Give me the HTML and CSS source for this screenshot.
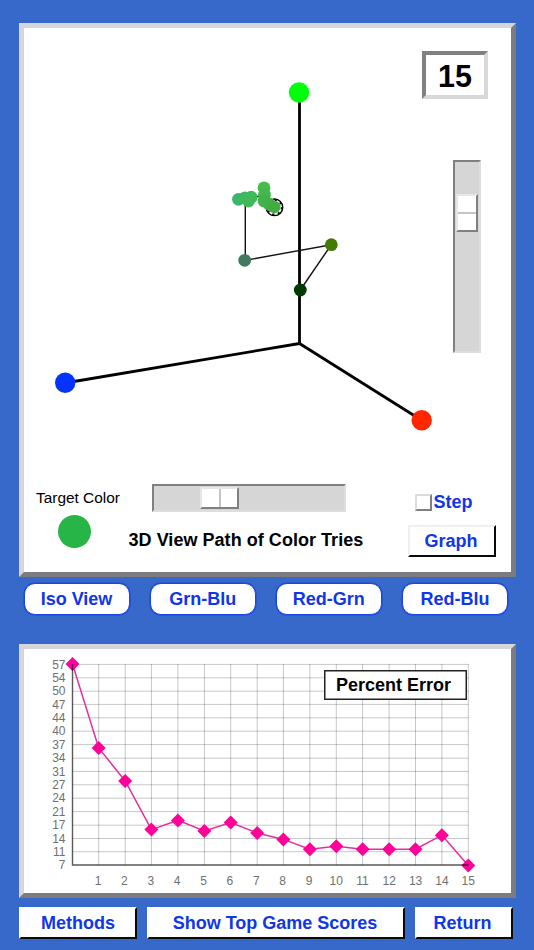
FILE: index.html
```html
<!DOCTYPE html>
<html lang="en">
<head>
<meta charset="utf-8">
<title>Color Tries</title>
<link rel="stylesheet" href="styles.css">
</head>
<body>
<main class="app">
  <section class="panel view">
    <svg class="scene" viewBox="24 28 487 442" width="487" height="442">
      <g class="axes">
        <path d="M299.500 343.500V92"/>
        <path d="M299.500 343.500L65 383"/>
        <path d="M299.500 343.500L422 420.500"/>
      </g>
      <circle cx="299" cy="92.500" r="10.200" fill="#00ff0a"/>
      <circle cx="65.200" cy="382.800" r="10.200" fill="#0433ff"/>
      <circle cx="421.700" cy="420.300" r="10.200" fill="#ff2600"/>
      <path class="trail" d="M300.300 290L331.300 244.700L245.300 260.300V199L251 197L264 196V188"/>
      <circle cx="274.500" cy="207.300" r="8.300" fill="#fff" stroke="#000" stroke-width="1.300"/>
      <circle cx="274.500" cy="207.300" r="7.300" fill="none" stroke="#000" stroke-width="2" stroke-dasharray="2.200 3.530"/>
      <circle cx="300.300" cy="290" r="6.400" fill="#013a01"/>
      <circle cx="331.300" cy="244.700" r="6.400" fill="#417c05"/>
      <circle cx="244.700" cy="260.300" r="6.400" fill="#427a5f"/>
      <circle cx="238.500" cy="199.300" r="6.400" fill="#3db46c"/>
      <circle cx="245" cy="197.800" r="6.400" fill="#3fb660"/>
      <circle cx="248.500" cy="201" r="6.400" fill="#40b858"/>
      <circle cx="251.200" cy="197.200" r="6.400" fill="#41b95a"/>
      <circle cx="264" cy="187.800" r="6.400" fill="#44bd49"/>
      <circle cx="264.500" cy="194.500" r="6.400" fill="#44b84c"/>
      <circle cx="264" cy="201" r="6.400" fill="#43b24b"/>
      <circle cx="269" cy="204" r="6.400" fill="#43af48"/>
      <circle cx="274.300" cy="207" r="6.200" fill="#42ad3e"/>
    </svg>
    <div class="side">
      <output class="counter">15</output>
      <div class="slider vertical"><div class="thumb"><i></i><i></i></div></div>
    </div>
    <div class="controls">
      <div class="target">
        <span>Target Color</span>
        <div class="swatch"></div>
      </div>
      <div class="center">
        <div class="slider horizontal"><div class="thumb"><i></i><i></i></div></div>
        <h1>3D View Path of Color Tries</h1>
      </div>
      <div class="actions">
        <label class="step"><span class="box"></span>Step</label>
        <button class="bevel graph">Graph</button>
      </div>
    </div>
  </section>

  <nav class="views">
    <button>Iso View</button>
    <button>Grn-Blu</button>
    <button>Red-Grn</button>
    <button>Red-Blu</button>
  </nav>

  <section class="panel error">
    <svg class="chart" viewBox="24 649 487 244" width="487" height="244">
      <path class="grid" d="M72.500 664.400H468.500M72.500 677.800H468.500M72.500 691.200H468.500M72.500 704.400H468.500M72.500 717.800H468.500M72.500 731.200H468.500M72.500 744.600H468.500M72.500 758.200H468.500M72.500 771.400H468.500M72.500 784.800H468.500M72.500 798.200H468.500M72.500 811.600H468.500M72.500 825.200H468.500M72.500 838.500H468.500M72.500 851.700H468.500M98.700 664V865M125.200 664V865M151.400 664V865M177.900 664V865M204.400 664V865M230.700 664V865M257.200 664V865M283.400 664V865M309.900 664V865M336.300 664V865M362.600 664V865M389.100 664V865M415.500 664V865M441.900 664V865M468.300 664V865"/>
      <g class="labels y">
        <text x="65.500" y="668.500">57</text><text x="65.500" y="681.900">54</text>
        <text x="65.500" y="695.300">50</text><text x="65.500" y="708.500">47</text>
        <text x="65.500" y="721.900">44</text><text x="65.500" y="735.300">40</text>
        <text x="65.500" y="748.700">37</text><text x="65.500" y="762.200">34</text>
        <text x="65.500" y="775.500">31</text><text x="65.500" y="788.900">27</text>
        <text x="65.500" y="802.300">24</text><text x="65.500" y="815.700">21</text>
        <text x="65.500" y="829.200">17</text><text x="65.500" y="842.700">14</text>
        <text x="65.500" y="856">11</text><text x="65.500" y="869.300">7</text>
      </g>
      <g class="labels x">
        <text x="98" y="885">1</text><text x="124.300" y="885">2</text>
        <text x="150.800" y="885">3</text><text x="177" y="885">4</text>
        <text x="203.500" y="885">5</text><text x="229.800" y="885">6</text>
        <text x="256.300" y="885">7</text><text x="282.700" y="885">8</text>
        <text x="309" y="885">9</text><text x="336.300" y="885">10</text>
        <text x="362.500" y="885">11</text><text x="389.200" y="885">12</text>
        <text x="415.600" y="885">13</text><text x="442" y="885">14</text>
        <text x="468.300" y="885">15</text>
      </g>
      <polyline class="series" points="72.500,664 98.700,748 125.200,781 151.400,829.600 177.900,820.400 204.400,831 230.700,822.600 257.200,833 283.400,839.400 309.900,849.200 336.300,846.200 362.600,849.200 389.100,849.200 415.500,849.200 441.900,835.200 468.300,865.500"/>
      <defs><path id="mark" d="M0-7L7 0L0 7L-7 0Z"/></defs>
      <g fill="#ff0099">
        <use href="#mark" x="72.500" y="664"/><use href="#mark" x="98.700" y="748"/>
        <use href="#mark" x="125.200" y="781"/><use href="#mark" x="151.400" y="829.600"/>
        <use href="#mark" x="177.900" y="820.400"/><use href="#mark" x="204.400" y="831"/>
        <use href="#mark" x="230.700" y="822.600"/><use href="#mark" x="257.200" y="833"/>
        <use href="#mark" x="283.400" y="839.400"/><use href="#mark" x="309.900" y="849.200"/>
        <use href="#mark" x="336.300" y="846.200"/><use href="#mark" x="362.600" y="849.200"/>
        <use href="#mark" x="389.100" y="849.200"/><use href="#mark" x="415.500" y="849.200"/>
        <use href="#mark" x="441.900" y="835.200"/><use href="#mark" x="468.300" y="865.500"/>
      </g>
      <path class="frame" d="M72.500 664V865H468.500"/>
    </svg>
    <h2 class="chart-title">Percent Error</h2>
  </section>

  <footer class="bottom">
    <button class="bevel methods">Methods</button>
    <button class="bevel scores">Show Top Game Scores</button>
    <button class="bevel return">Return</button>
  </footer>
</main>
</body>
</html>
```
FILE: styles.css
```css
* { box-sizing: border-box; }

body {
  margin: 0;
  background: #3769cb;
  font-family: "Liberation Sans", Arial, sans-serif;
  color: #000;
}

.app {
  width: 534px;
  height: 950px;
  padding: 23.400px 18px 0 19px;
  display: flex;
  flex-direction: column;
  overflow: hidden;
}

.panel {
  width: 497px;
  flex: none;
  background: #fff;
  border: 5px solid;
  border-color: #d6d6d8 #7c7c80 #7c7c80 #d6d6d8;
  display: grid;
}

.view {
  height: 553.300px;
  grid-template-rows: 442px 1fr;
}

.scene, .side { grid-area: 1 / 1; }
.scene, .chart { display: block; }

.axes path { stroke: #000; stroke-width: 2.800; fill: none; }
.trail { stroke: #111; stroke-width: 1.400; fill: none; }

.side {
  justify-self: end;
  width: 89px;
  padding-top: 23px;
}

.counter {
  display: block;
  width: 66px;
  height: 48px;
  border: 4px solid;
  border-color: #808080 #d8d8d8 #d8d8d8 #808080;
  font: bold 30.500px/43px "Liberation Sans", Arial, sans-serif;
  text-align: center;
}

.slider {
  background: #d6d6d6;
  border: 2px solid;
  border-color: #808080 #dedede #dedede #808080;
  display: flex;
}

.vertical {
  width: 28px;
  height: 193px;
  margin: 61px 0 0 31px;
  padding: 32px 1px 0 1px;
}

.horizontal {
  width: 194px;
  height: 28px;
  padding: 1px 0 0 46px;
}

.thumb {
  background: #fff;
  border: 2px solid;
  border-color: #e6e6e6 #808080 #808080 #e6e6e6;
  display: flex;
}
.vertical .thumb { width: 22px; height: 38px; flex-direction: column; }
.horizontal .thumb { width: 39px; height: 22px; }
.thumb i { flex: 1; }
.vertical .thumb i + i { border-top: 2px solid #c4c4c4; }
.horizontal .thumb i + i { border-left: 2px solid #c4c4c4; }

.controls {
  display: grid;
  grid-template-columns: 104px 280px 1fr;
}

.target {
  padding: 19px 0 0 12px;
  font-size: 15.400px;
  line-height: 18px;
  white-space: nowrap;
}
.swatch {
  width: 33.500px;
  height: 33.500px;
  margin: 7.500px 0 0 21.500px;
  border-radius: 50%;
  background: #26b546;
}

.center { padding-top: 14px; }
.center .slider { margin-left: 24px; }
.center h1 {
  margin: 18px 0 0 .5px;
  font-size: 18px;
  line-height: 20px;
  letter-spacing: .04px;
  white-space: nowrap;
}

.actions { padding-top: 22px; }
.step {
  display: flex;
  align-items: center;
  gap: 2px;
  height: 20px;
  margin-left: 6.500px;
  font-weight: bold;
  font-size: 18px;
  color: #0f36ea;
}
.box {
  width: 17px;
  height: 17px;
  border: 2px solid;
  border-color: #dcdcdc #808080 #808080 #dcdcdc;
}

button {
  padding: 0;
  font: bold 18px/20px "Liberation Sans", Arial, sans-serif;
  color: #0f36ea;
  background: #fff;
  white-space: nowrap;
}

.bevel {
  border: 2px solid;
  border-color: #f0f0f0 #0a0a0a #0a0a0a #f0f0f0;
  height: 32px;
}
.graph { display: block; width: 88px; margin-top: 13px; padding: 0 2px 1px 0; }

.views {
  display: flex;
  justify-content: space-between;
  padding: 0 8px 0 4.500px;
  margin-top: 6px;
}
.views button {
  width: 106px;
  height: 32px;
  border: 1px solid #1b45e4;
  border-radius: 11px;
  box-shadow: 0 0 0 .5px #1b45e4;
}

.error {
  height: 254px;
  margin-top: 29.300px;
}
.chart, .chart-title { grid-area: 1 / 1; }
.grid { stroke: #000; stroke-opacity: .22; stroke-width: 1; fill: none; }
.frame { stroke: #000; stroke-opacity: .65; stroke-width: 1.400; fill: none; }
.series { stroke: #e62e9f; stroke-width: 1.500; fill: none; }
.labels { font-size: 12px; fill: #707070; }
.labels.x { text-anchor: middle; }
.labels.y { text-anchor: end; }

.chart-title {
  justify-self: end;
  width: 143px;
  height: 30px;
  margin: 21px 44px 0 0;
  padding-right: 4px;
  border: 1px solid #222;
  box-shadow: inset 0 0 0 .5px #222;
  background: #fff;
  font-size: 18px;
  line-height: 28px;
  text-align: center;
}

.bottom {
  display: flex;
  justify-content: space-between;
  margin-top: 9px;
  padding-right: 3px;
}
.bottom .bevel { border-top-color: #fff; border-left-color: #fff; }
.methods { width: 118px; }
.scores { width: 258px; padding-right: 2px; }
.return { width: 98px; padding-right: 3px; }
```
